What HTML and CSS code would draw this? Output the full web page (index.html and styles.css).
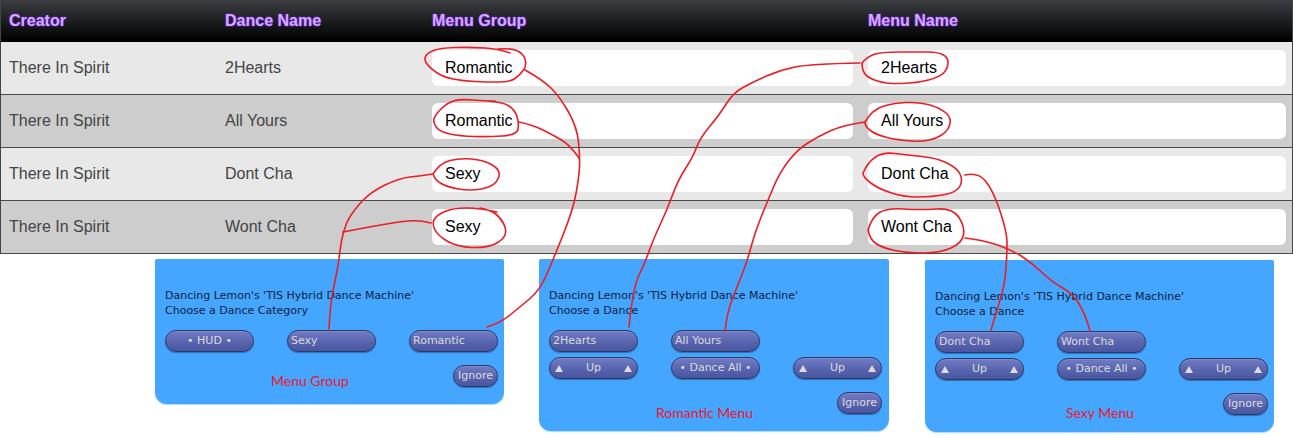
FILE: index.html
```html
<!DOCTYPE html>
<html lang="en">
<head>
<meta charset="utf-8">
<title>Dance Menu Mapping</title>
<link rel="stylesheet" href="styles.css">
</head>
<body>
<main class="page">
  <section class="table">
    <div class="row head">
      <div class="cell">Creator</div><div class="cell">Dance Name</div><div class="cell">Menu Group</div><div class="cell">Menu Name</div>
    </div>
    <div class="row light">
      <div class="cell">There In Spirit</div><div class="cell">2Hearts</div>
      <div class="cell"><div class="field">Romantic</div></div><div class="cell"><div class="field">2Hearts</div></div>
    </div>
    <div class="row dark">
      <div class="cell">There In Spirit</div><div class="cell">All Yours</div>
      <div class="cell"><div class="field">Romantic</div></div><div class="cell"><div class="field">All Yours</div></div>
    </div>
    <div class="row light">
      <div class="cell">There In Spirit</div><div class="cell">Dont Cha</div>
      <div class="cell"><div class="field">Sexy</div></div><div class="cell"><div class="field">Dont Cha</div></div>
    </div>
    <div class="row dark">
      <div class="cell">There In Spirit</div><div class="cell">Wont Cha</div>
      <div class="cell"><div class="field">Sexy</div></div><div class="cell"><div class="field">Wont Cha</div></div>
    </div>
  </section>

  <section class="dialogs">
    <article class="dialog">
      <p class="message">Dancing Lemon's 'TIS Hybrid Dance Machine'<br>Choose a Dance Category</p>
      <div class="buttons">
        <div class="btn center">• HUD •</div><div class="btn">Sexy</div><div class="btn">Romantic</div>
      </div>
      <div class="footer">
        <span class="label label-group">Menu Group</span><div class="btn ignore">Ignore</div>
      </div>
    </article>

    <article class="dialog dialog-wide">
      <p class="message">Dancing Lemon's 'TIS Hybrid Dance Machine'<br>Choose a Dance</p>
      <div class="buttons">
        <div class="btn">2Hearts</div><div class="btn">All Yours</div><div></div>
        <div class="btn updown"><i class="tri"></i>Up<i class="tri"></i></div>
        <div class="btn center">• Dance All •</div>
        <div class="btn updown"><i class="tri"></i>Up<i class="tri"></i></div>
      </div>
      <div class="footer">
        <span class="label label-romantic">Romantic Menu</span><div class="btn ignore">Ignore</div>
      </div>
    </article>

    <article class="dialog dialog-last">
      <p class="message">Dancing Lemon's 'TIS Hybrid Dance Machine'<br>Choose a Dance</p>
      <div class="buttons">
        <div class="btn">Dont Cha</div><div class="btn">Wont Cha</div><div></div>
        <div class="btn updown"><i class="tri"></i>Up<i class="tri"></i></div>
        <div class="btn center">• Dance All •</div>
        <div class="btn updown"><i class="tri"></i>Up<i class="tri"></i></div>
      </div>
      <div class="footer">
        <span class="label label-sexy">Sexy Menu</span><div class="btn ignore">Ignore</div>
      </div>
    </article>
  </section>

  <svg class="marks" viewBox="0 0 1293 438" width="1293" height="438" aria-hidden="true">
    <path d="M510,53 Q500,49 485,48 Q470,47 455,47.5 Q440,48 433.5,50.5 Q427,53 425.5,56.5 Q424,60 427,64 Q430,68 436.5,72.5 Q443,77 453,79 Q463,81 475,81.5 Q487,82 498.5,82 Q510,82 515,78.5 Q520,75 523.5,70 Q527,65 525,59 Q523,53 516.5,50.5 Q510,48 498,49"/>
    <path d="M525,70 Q543,80 551.5,88.5 Q560,97 568.5,112 Q577,127 578.5,142 Q580,157 579.5,167 Q579,177 576,193.5 Q573,210 563,235 Q553,260 546.5,275 Q540,290 530,298.5 Q520,307 510,315 Q500,323 487,327"/>
    <path d="M495,101 Q487,101 473.5,100 Q460,99 453.5,101 Q447,103 441,109 Q435,115 434,119 Q433,123 436.5,127.5 Q440,132 450,134 Q460,136 473.5,136.5 Q487,137 502,136 Q517,135 518,129 Q519,123 517,116.5 Q515,110 509,106 Q503,102 487,101"/>
    <path d="M519,122 Q533,125 543,130 Q553,135 561.5,140 Q570,145 579,158"/>
    <path d="M433,174 Q440,163 450,160.5 Q460,158 471.5,159 Q483,160 490.5,164 Q498,168 499,172.5 Q500,177 496,182 Q492,187 481,189 Q470,191 458.5,189 Q447,187 441,183.5 Q435,180 433,174"/>
    <path d="M433,174 Q420,176 410,177 Q400,178 385,185 Q370,192 360,203.5 Q350,215 346.5,223.5 Q343,232 341.5,241 Q340,250 339,258.5 Q338,267 335.5,278.5 Q333,290 331.5,300 Q330,310 329,329"/>
    <path d="M497,212 Q480,208 466.5,208 Q453,208 445,211.5 Q437,215 434.5,219 Q432,223 434.5,229 Q437,235 447,241 Q457,247 472,247.5 Q487,248 495,244 Q503,240 505,235 Q507,230 503.5,223.5 Q500,217 495,213.5 Q490,210 480,208"/>
    <path d="M431,223 Q420,220 407.5,221 Q395,222 343,232"/>
    <path d="M862,63 Q867,57 873.5,54.5 Q880,52 900,52 Q920,52 928.5,52 Q937,52 942.5,54.5 Q948,57 948,62.5 Q948,68 944,72.5 Q940,77 928.5,80 Q917,83 902,83.5 Q887,84 877.5,81 Q868,78 865,74 Q862,70 862,63"/>
    <path d="M860,63 Q810,64 795,67 Q780,70 766.5,76 Q753,82 743,87.5 Q733,93 726.5,103.5 Q720,114 710,126 Q700,138 696.5,147.5 Q693,157 685.5,168.5 Q678,180 672.5,195 Q667,210 660,225 Q653,240 649,251.5 Q645,263 639,275 Q633,287 629,327"/>
    <path d="M865,122 Q872,110 882.5,106.5 Q893,103 906.5,102.5 Q920,102 930,105 Q940,108 946,113 Q952,118 949.5,125.5 Q947,133 937,137.5 Q927,142 912,141 Q897,140 887,137.5 Q877,135 871,131 Q865,127 865,122"/>
    <path d="M865,122 Q843,125 830,131 Q817,137 807,143.5 Q797,150 788.5,161 Q780,172 774,186 Q768,200 761.5,216 Q755,232 751,247 Q747,262 742,274.5 Q737,287 732,300 Q727,313 725,331"/>
    <path d="M863,173 Q868,162 875.5,157 Q883,152 895,153.5 Q907,155 922,156.5 Q937,158 947,163 Q957,168 960,174 Q963,180 960,186 Q957,192 945,194.5 Q933,197 918,197 Q903,197 890,192.5 Q877,188 870,182.5 Q863,177 863,173"/>
    <path d="M965,175 Q978,172 985.5,181 Q993,190 1000,211 Q1007,232 1007,242.5 Q1007,253 1006,268 Q1005,283 1001.5,295 Q998,307 991,330"/>
    <path d="M868,230 Q872,217 879.5,212.5 Q887,208 903.5,209 Q920,210 936.5,209 Q953,208 959,217.5 Q965,227 963.5,235 Q962,243 951,248 Q940,253 923.5,253 Q907,253 895,250.5 Q883,248 876.5,244 Q870,240 868,230"/>
    <path d="M965,238 Q983,240 997.5,245 Q1012,250 1022,256.5 Q1032,263 1042,272.5 Q1052,282 1062,287.5 Q1072,293 1078.5,303 Q1085,313 1090,331"/>
  </svg>
</main>
</body>
</html>
```
FILE: styles.css
```css
* { box-sizing: border-box; }
html, body { margin: 0; padding: 0; background: #fff; }
body { width: 1293px; height: 438px; overflow: hidden; font-family: "Liberation Sans", Arial, sans-serif; }
.page { position: relative; width: 1293px; height: 438px; }

.table { border-left: 1px solid #444; border-right: 1px solid #444; }
.row {
  display: grid;
  grid-template-columns: 215px 207px 436px 1fr;
  height: 53px;
  border-bottom: 1px solid #4a4a4a;
  align-items: center;
  font-size: 16px;
  color: #444;
}
.row.light { background: #e8e8e8; }
.row.dark { background: #cdcdcd; }
.row.head {
  height: 42px;
  border-bottom: 1px solid #000;
  background: linear-gradient(#3c3e42 0, #1a1b1d 55%, #000 100%);
  font-weight: 700;
  color: #d5a6ff;
  text-shadow: 0 0 2px #7a2cff, 0 0 1px #7a2cff;
}
.cell { padding: 0 6px 0 8px; }
.row .cell:nth-child(n+2) { padding-left: 9px; }
.field {
  height: 36px;
  line-height: 36px;
  padding-left: 13px;
  background: #fff;
  border-radius: 6px;
  color: #000;
  margin-right: 0;
}

.dialogs { display: flex; align-items: flex-start; gap: 35px; padding: 5px 0 0 155px; }
.dialog {
  width: 349px;
  padding: 29px 0 17px 10px;
  background: #44a6ff;
  border-radius: 2px 2px 12px 12px;
  box-shadow: 0 1px 1px #a9d6ff;
  font-family: "DejaVu Sans", sans-serif;
  font-size: 11px;
}
.dialog-wide { width: 350px; }
.dialog-last { margin: 1px 0 0 1px; }
.message { margin: 0 0 12px; line-height: 15px; color: #0b2140; white-space: nowrap; }
.buttons { display: grid; grid-template-columns: repeat(3, 89px); gap: 5px 33px; width: 333px; }
.btn {
  height: 22px;
  line-height: 20px;
  padding: 0 3px;
  border: 1px solid #2d3a60;
  border-radius: 11px;
  background: linear-gradient(#727dc4 0, #5d68b3 45%, #4a559f 100%);
  box-shadow: inset 0 1px 0 #8089cc, 0 1px 1px #2f6fb5;
  color: #dcdcdc;
  white-space: nowrap;
}
.center { text-align: center; }
.updown { display: flex; justify-content: space-between; align-items: center; padding: 0 5px; }
.tri { width: 0; height: 0; border-left: 4px solid transparent; border-right: 4px solid transparent; border-bottom: 7px solid #dcdcdc; }
.footer { display: flex; justify-content: space-between; align-items: flex-start; width: 333px; height: 22px; margin-top: 13px; }
.ignore { width: 45px; padding: 0; text-align: center; }
.label { font-family: Lato, "Open Sans", sans-serif; font-size: 14px; line-height: 22px; color: #f0142d; }
.label-group { margin: 5px 0 0 106px; }
.label-romantic { margin: 10px 0 0 107px; }
.label-sexy { margin: 9px 0 0 131px; }

.marks { position: absolute; left: 0; top: 0; pointer-events: none; }
.marks path { fill: none; stroke: #ee1c25; stroke-width: 1.6; stroke-linecap: round; stroke-linejoin: round; }
```
